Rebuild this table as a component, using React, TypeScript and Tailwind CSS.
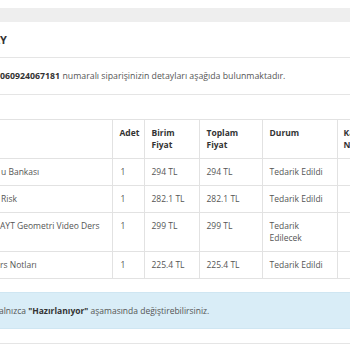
import React from 'react';

type Row = { name: string; pad: string; qty: number; unit: string; total: string; status: string };

const rows: Row[] = [
  { name: 'u Bankası', pad: 'pl-[1px]', qty: 1, unit: '294 TL', total: '294 TL', status: 'Tedarik Edildi' },
  { name: 'Risk', pad: 'pl-[1px]', qty: 1, unit: '282.1 TL', total: '282.1 TL', status: 'Tedarik Edildi' },
  { name: 'AYT Geometri Video Ders', pad: 'pl-0', qty: 1, unit: '299 TL', total: '299 TL', status: 'Tedarik Edilecek' },
  { name: 'rs Notları', pad: 'pl-0', qty: 1, unit: '225.4 TL', total: '225.4 TL', status: 'Tedarik Edildi' },
];

export default function App() {
  return (
    <div
      className="w-[350px] h-[350px] overflow-hidden bg-white text-[#555] text-[8.5px] leading-[12px]"
      style={{ fontFamily: '"Open Sans", "Noto Sans", sans-serif' }}
    >
      <div className="h-[8px]" />
      <div className="h-[14px] bg-[#eeeeee]" />

      {/* page title, cut at the left edge */}
      <div className="h-[36px] flex items-center border-b border-[#e5e5e5] whitespace-nowrap">
        <div className="w-[7px] flex justify-end">
          <h2 className="shrink-0 text-[11px] font-bold text-[#333]">SİPARİŞ DETAY</h2>
        </div>
      </div>

      <div className="h-[37px] flex items-center border-b border-[#e5e5e5] whitespace-nowrap text-[8.75px]">
        <div className="w-[60px] flex justify-end">
          <b className="shrink-0 text-[#333]">2023060924067181</b>
        </div>
        <span className="ml-[2.5px]">numaralı siparişinizin detayları aşağıda bulunmaktadır.</span>
      </div>

      <div className="h-[24px]" />

      <table className="table-fixed border-collapse w-[400px]">
        <colgroup>
          <col className="w-[112px]" />
          <col className="w-[32px]" />
          <col className="w-[55px]" />
          <col className="w-[63px]" />
          <col className="w-[75px]" />
          <col className="w-[63px]" />
        </colgroup>
        <thead>
          <tr className="border-y border-[#e2e2e2] text-left align-top text-[#333]">
            <th className="py-[7px] px-[7px] font-bold"></th>
            <th className="py-[7px] pl-[7px] font-bold border-l border-[#e2e2e2]">Adet</th>
            <th className="py-[7px] pl-[7px] font-bold border-l border-[#e2e2e2]">Birim<br />Fiyat</th>
            <th className="py-[7px] pl-[7px] font-bold border-l border-[#e2e2e2]">Toplam<br />Fiyat</th>
            <th className="py-[7px] pl-[7px] font-bold border-l border-[#e2e2e2]">Durum</th>
            <th className="py-[7px] pl-[6px] font-bold border-l border-[#e2e2e2] whitespace-nowrap">Kargo<br />No</th>
          </tr>
        </thead>
        <tbody>
          {rows.map((r) => (
            <tr key={r.name} className="border-b border-[#e2e2e2] align-top">
              <td className={`py-[7px] whitespace-nowrap ${r.pad}`}>{r.name}</td>
              <td className="py-[7px] pl-[8px] border-l border-[#e2e2e2]">{r.qty}</td>
              <td className="py-[7px] pl-[7px] border-l border-[#e2e2e2] whitespace-nowrap">{r.unit}</td>
              <td className="py-[7px] pl-[7px] border-l border-[#e2e2e2] whitespace-nowrap">{r.total}</td>
              <td className="py-[7px] pl-[7px] pr-[8px] border-l border-[#e2e2e2]">{r.status}</td>
              <td className="py-[7px] border-l border-[#e2e2e2]"></td>
            </tr>
          ))}
        </tbody>
      </table>

      <div className="h-[13px]" />

      <div className="h-[37px] flex items-center bg-[#d9edf7] border-y border-[#cfe6f2] whitespace-nowrap">
        <p className="-ml-[1px]">
          alnızca <b className="text-[#333]">"Hazırlanıyor"</b> aşamasında değiştirebilirsiniz.
        </p>
      </div>

      <div className="h-[15px] border-b border-[#e5e5e5]" />
    </div>
  );
}
